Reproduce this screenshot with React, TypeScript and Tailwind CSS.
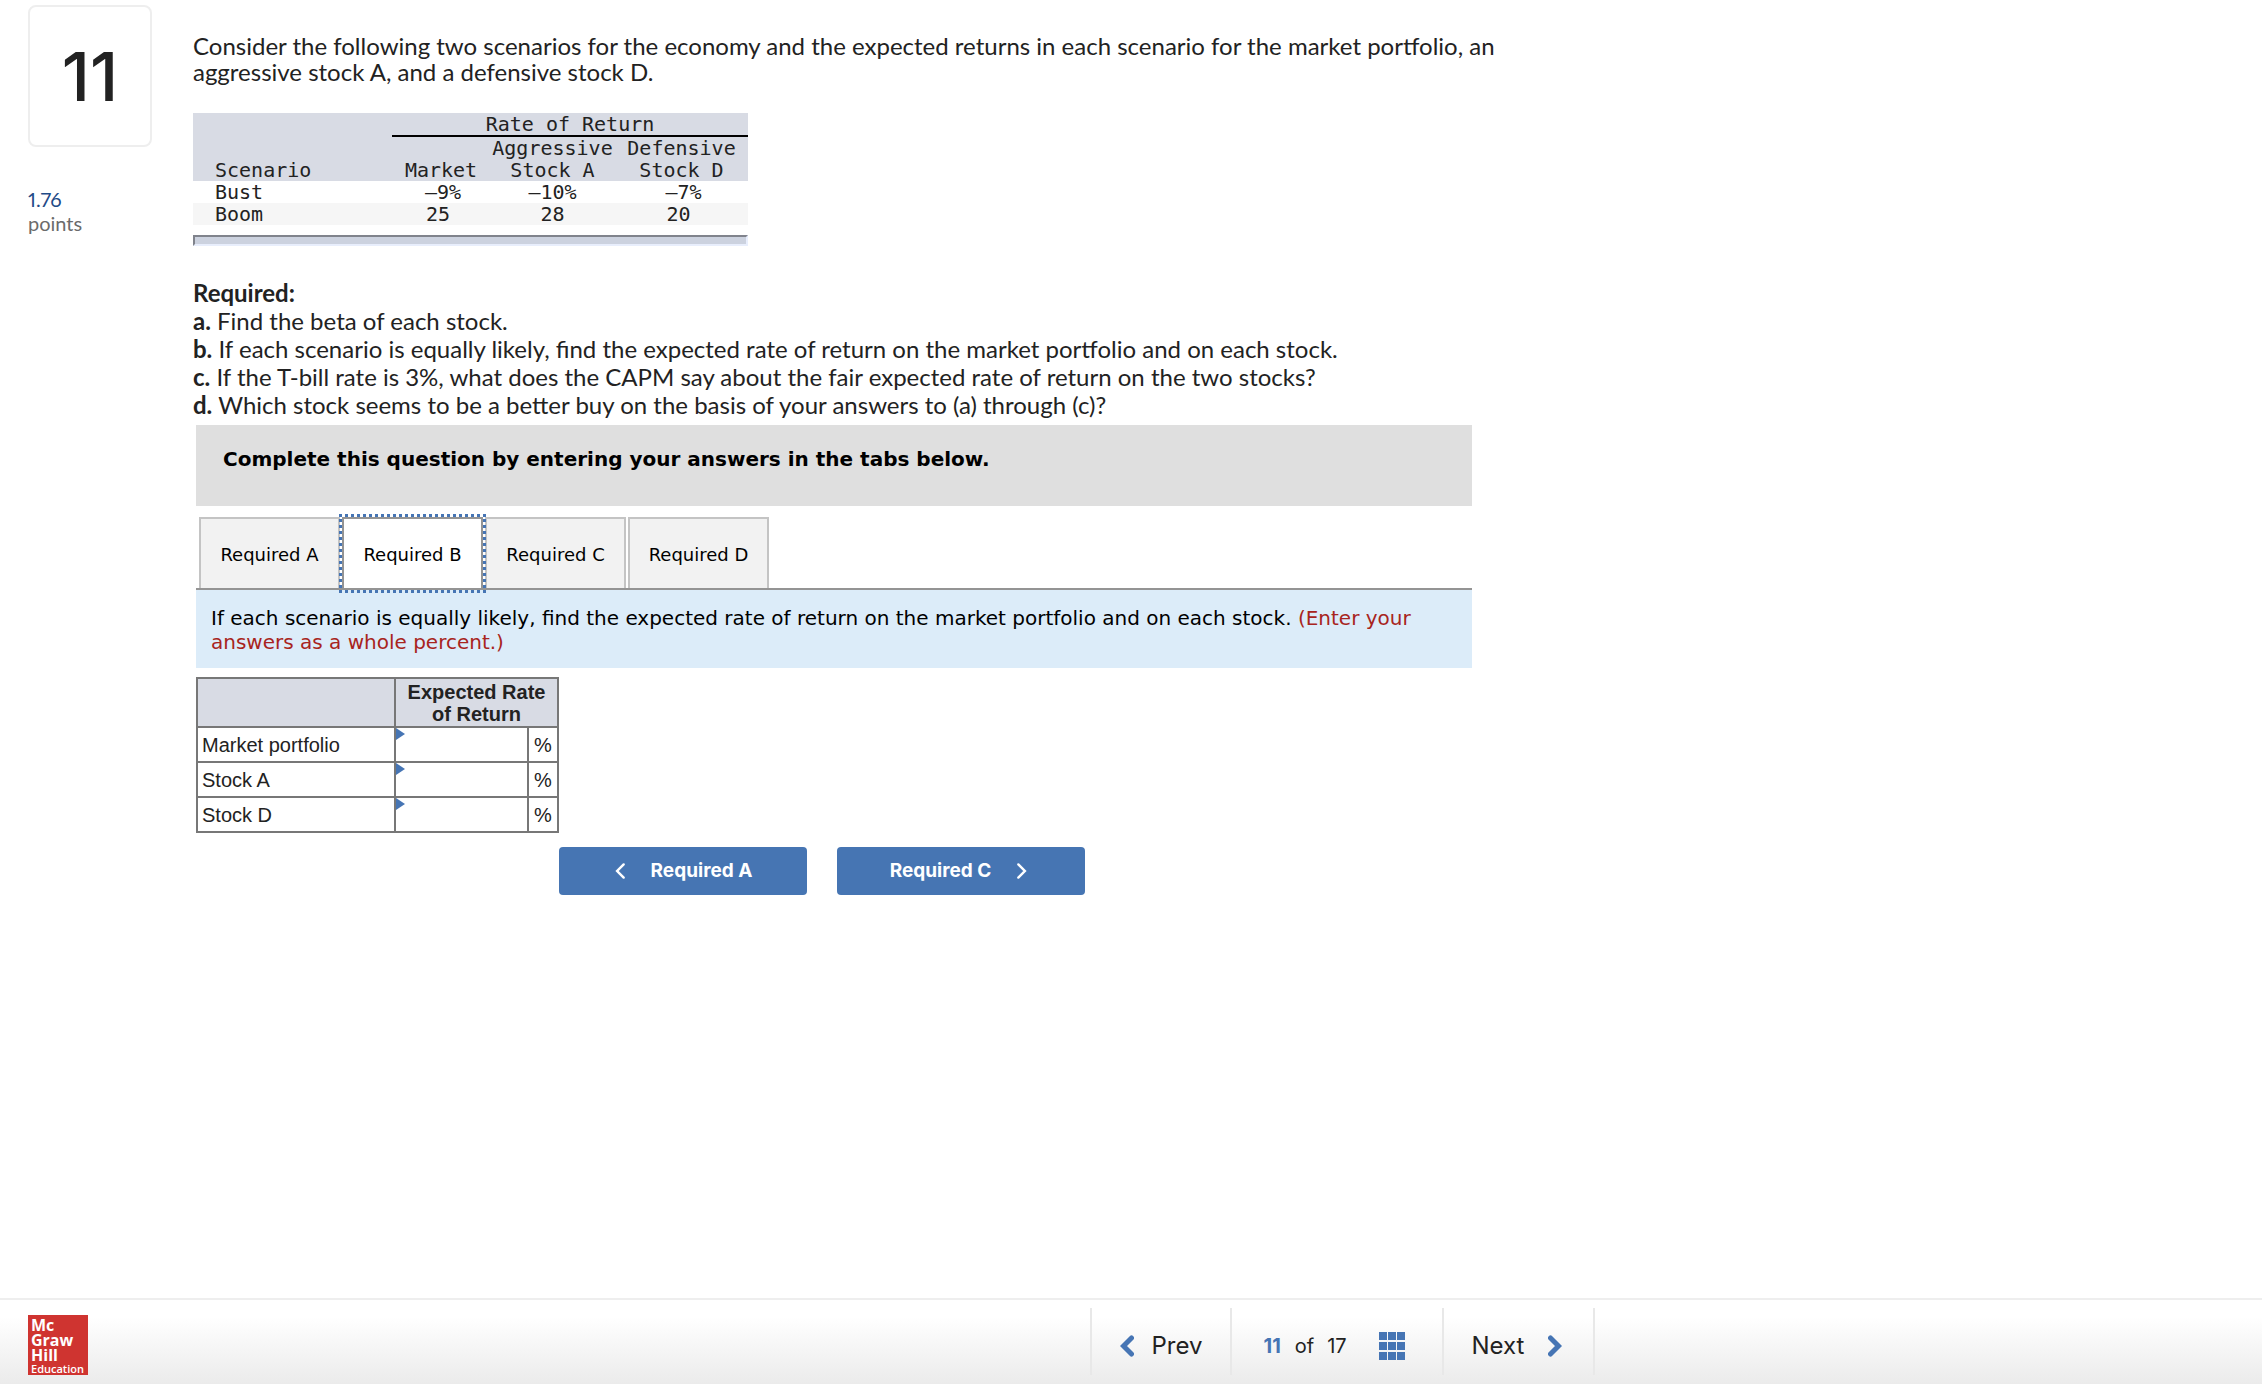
import React, { useState } from "react";

type Tab = "A" | "B" | "C" | "D";
const tabs: Tab[] = ["A", "B", "C", "D"];

const scenarios = [
  { name: "Bust", market: "–9%", a: "–10%", d: "–7%", align: "pl-1" },
  { name: "Boom", market: "25", a: "28", d: "20", align: "pr-1.5" },
];

const requirements = [
  { key: "a.", text: "Find the beta of each stock." },
  {
    key: "b.",
    text: "If each scenario is equally likely, find the expected rate of return on the market portfolio and on each stock.",
  },
  {
    key: "c.",
    text: "If the T-bill rate is 3%, what does the CAPM say about the fair expected rate of return on the two stocks?",
  },
  { key: "d.", text: "Which stock seems to be a better buy on the basis of your answers to (a) through (c)?" },
];

const answerRows = ["Market portfolio", "Stock A", "Stock D"];

function Chevron({ dir, className, width }: { dir: "left" | "right"; className: string; width: number }) {
  return (
    <svg viewBox="0 0 14 22" className={className} fill="none" stroke="currentColor" strokeWidth={width} strokeLinecap="round" aria-hidden="true">
      <path d={dir === "left" ? "M11.5 3 3.5 11l8 8" : "M2.5 3l8 8-8 8"} />
    </svg>
  );
}

function QuestionNumber() {
  return (
    <aside className="w-[165px] shrink-0 font-['Lato',sans-serif] proportional-nums">
      <div className="flex h-[142px] w-[124px] items-center justify-center rounded-lg border-2 border-[#eeeeee] font-['Inter',sans-serif] text-[68px] leading-none font-medium text-[#222222]">
        11
      </div>
      <div className="mt-10 text-xl leading-6 text-[#1f4b87]">1.76</div>
      <div className="text-xl leading-6 text-[#6b6b6b]">points</div>
    </aside>
  );
}

function ScenarioTable() {
  return (
    <div className="w-[555px] font-['DejaVu_Sans_Mono',monospace] text-xl leading-[22px] text-[#222222]">
      <table className="w-full table-fixed border-collapse text-center">
        <colgroup>
          <col className="w-[199px]" />
          <col className="w-[98px]" />
          <col className="w-[125px]" />
          <col />
        </colgroup>
        <thead className="bg-[#d8dbe4]">
          <tr>
            <th className="p-0" />
            <th colSpan={3} className="border-b-2 border-black p-0 font-normal">
              Rate of Return
            </th>
          </tr>
          <tr className="align-bottom">
            <th className="p-0 pl-[22px] text-left font-normal">Scenario</th>
            <th className="p-0 font-normal">Market</th>
            <th className="p-0 font-normal">
              Aggressive
              <br />
              Stock A
            </th>
            <th className="p-0 font-normal">
              Defensive
              <br />
              Stock D
            </th>
          </tr>
        </thead>
        <tbody>
          {scenarios.map((s) => (
            <tr key={s.name} className="even:bg-[#f6f6f6]">
              <td className="pl-[22px] text-left">{s.name}</td>
              <td className={s.align}>{s.market}</td>
              <td>{s.a}</td>
              <td className={s.align}>{s.d}</td>
            </tr>
          ))}
        </tbody>
      </table>
      <div className="mt-[10px] h-[11px] border-2 border-t-[#80838c] border-r-[#e8eefc] border-b-[#e8eefc] border-l-[#80838c] bg-[#ccd2df]" />
    </div>
  );
}

function Tabs({ active, onSelect }: { active: Tab; onSelect: (t: Tab) => void }) {
  return (
    <div role="tablist" className="mt-[11px] flex gap-[2px] border-b-2 border-[#949494] pl-[3px]">
      {tabs.map((t) => (
        <button
          key={t}
          role="tab"
          type="button"
          aria-selected={t === active}
          onClick={() => onSelect(t)}
          className={
            t === active
              ? "z-10 -mb-[2px] h-[73px] w-[141px] border-2 border-[#949494] bg-white pt-[2px] text-lg text-black outline-3 outline-dotted outline-[#4675b4]"
              : "h-[71px] w-[141px] border-2 border-b-0 border-[#c4c4c4] bg-[#f2f2f2] pt-[2px] text-lg text-black"
          }
        >
          Required {t}
        </button>
      ))}
    </div>
  );
}

function AnswerTable() {
  return (
    <table className="mt-[9px] table-fixed border-collapse border-2 border-[#777777] font-['Liberation_Sans',Arial,sans-serif] text-xl leading-[22px] text-[#222222]">
      <colgroup>
        <col className="w-[198px]" />
        <col className="w-[133px]" />
        <col className="w-[30px]" />
      </colgroup>
      <thead>
        <tr className="h-[49px] bg-[#d8dbe4]">
          <th className="border-2 border-[#777777] p-0" />
          <th colSpan={2} className="border-2 border-[#777777] p-0">
            Expected Rate
            <br />
            of Return
          </th>
        </tr>
      </thead>
      <tbody>
        {answerRows.map((row, i) => (
          <tr key={row} className="h-[35px]">
            <td className="border-2 border-[#777777] px-1 py-0">
              <label htmlFor={`answer-${i}`}>{row}</label>
            </td>
            <td className="relative border-2 border-[#777777] p-0">
              <svg viewBox="0 0 9 12" className="absolute top-0 left-0 h-3 w-[9px] fill-[#4675b4]" aria-hidden="true">
                <path d="M0 0l9 6-9 6z" />
              </svg>
              <input id={`answer-${i}`} type="text" className="block h-[30px] w-full bg-transparent px-3 text-right outline-none" />
            </td>
            <td className="border-2 border-[#777777] p-0 text-center">%</td>
          </tr>
        ))}
      </tbody>
    </table>
  );
}

function FooterBar() {
  return (
    <footer className="mt-auto flex items-start border-t-2 border-[#eeeeee] bg-linear-to-b from-white from-20% to-[#ebebeb] px-7 pt-2 pb-[9px] font-['Inter',sans-serif] text-[#222222]">
      <a
        href="#home"
        className="mt-[7px] block size-[60px] shrink-0 bg-[#cf3430] pt-[3px] pl-[3px] font-['Open_Sans',sans-serif] text-base leading-[15px] font-bold text-white"
      >
        <span className="block">Mc</span>
        <span className="block">Graw</span>
        <span className="block">Hill</span>
        <span className="block text-[11px] leading-[11px] font-semibold">Education</span>
      </a>
      <nav aria-label="Question navigation" className="ml-[45.4%] flex h-[67px] divide-x-2 divide-[#e8e8e8] border-x-2 border-[#e8e8e8]">
        <button type="button" className="flex w-[140px] items-center pt-2 pl-7 text-2xl">
          <Chevron dir="left" width={5} className="mr-[18px] h-[22px] w-[14px] text-[#4675b4]" />
          Prev
        </button>
        <div className="flex w-[212px] items-center pt-2 pl-8 text-xl">
          <span className="font-bold text-[#4675b4]">11</span>
          <span className="ml-[14px]">of</span>
          <span className="ml-[13px]">17</span>
          <button type="button" aria-label="Question list" className="ml-8 grid grid-cols-3 gap-x-px gap-y-[2px]">
            {Array.from({ length: 9 }, (_, i) => (
              <span key={i} className="size-2 bg-[#4675b4]" />
            ))}
          </button>
        </div>
        <button type="button" className="flex w-[149px] items-center pt-2 pl-7 text-2xl">
          Next
          <Chevron dir="right" width={5} className="ml-6 h-[22px] w-[14px] text-[#4675b4]" />
        </button>
      </nav>
    </footer>
  );
}

export default function App() {
  const [active, setActive] = useState<Tab>("B");
  return (
    <div className="flex min-h-screen flex-col bg-white">
      <main className="flex px-7 pt-[5px] pb-6">
        <QuestionNumber />
        <section className="max-w-[1310px] grow pt-7 font-['Lato',sans-serif] text-2xl leading-7 text-[#222222] proportional-nums">
          <p className="mb-7 leading-[26px]">
            Consider the following two scenarios for the economy and the expected returns in each scenario for the market portfolio, an
            aggressive stock A, and a defensive stock D.
          </p>
          <ScenarioTable />
          <h2 className="mt-[33px] font-bold">Required:</h2>
          {requirements.map((r) => (
            <p key={r.key}>
              <b>{r.key}</b> {r.text}
            </p>
          ))}
          <div className="mt-[6px] mr-[31px] ml-[3px] font-['DejaVu_Sans',Verdana,sans-serif] text-xl leading-6 text-black">
            <p className="bg-[#dfdfdf] px-[27px] pt-[22px] pb-[35px] font-bold">Complete this question by entering your answers in the tabs below.</p>
            <Tabs active={active} onSelect={setActive} />
            <p className="bg-[#dcecf9] px-[15px] pt-4 pb-[14px]">
              If each scenario is equally likely, find the expected rate of return on the market portfolio and on each stock.{" "}
              <span className="text-[#a82420]">(Enter your answers as a whole percent.)</span>
            </p>
            <AnswerTable />
            <div className="mt-[14px] flex gap-[30px] pl-[363px] font-['Inter',sans-serif] text-[19px] font-bold text-white">
              <button type="button" className="flex h-12 w-[248px] items-center justify-center gap-[25px] rounded-sm bg-[#4675b3]">
                <Chevron dir="left" width={3} className="h-[18px] w-[12px]" />
                Required A
              </button>
              <button type="button" className="flex h-12 w-[248px] items-center justify-center gap-[25px] rounded-sm bg-[#4675b3] pr-1">
                Required C
                <Chevron dir="right" width={3} className="h-[18px] w-[12px]" />
              </button>
            </div>
          </div>
        </section>
      </main>
      <FooterBar />
    </div>
  );
}
